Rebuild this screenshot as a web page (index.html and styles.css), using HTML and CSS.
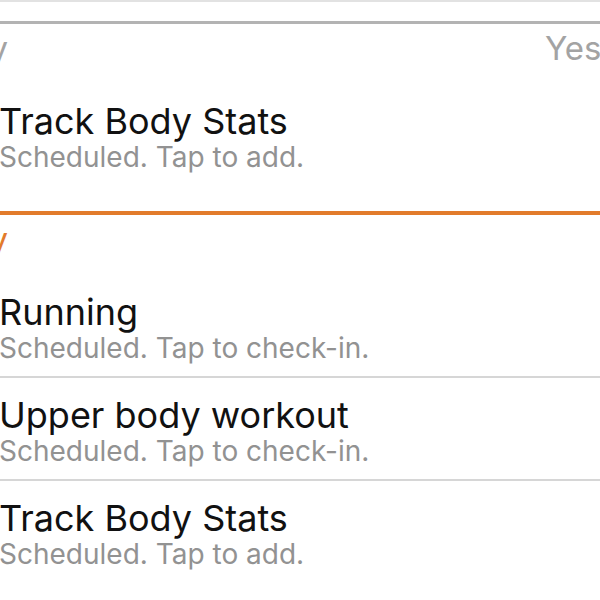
FILE: index.html
```html
<!DOCTYPE html>
<html lang="en">
<head>
<meta charset="utf-8">
<title>Schedule</title>
<link rel="stylesheet" href="styles.css">
</head>
<body>
<div class="screen">
  <div class="prev-row"></div>
  <section class="day day-past">
    <div class="day-head">
      <span class="day-name">Monday</span>
      <span class="day-date">Yesterday</span>
    </div>
    <div class="item item-last">
      <div class="item-title">Track Body Stats</div>
      <div class="item-sub">Scheduled. Tap to add.</div>
    </div>
  </section>
  <section class="day day-today">
    <div class="day-head">
      <span class="day-name">Today</span>
    </div>
    <div class="item">
      <div class="item-title">Running</div>
      <div class="item-sub">Scheduled. Tap to check-in.</div>
    </div>
    <div class="item">
      <div class="item-title">Upper body workout</div>
      <div class="item-sub">Scheduled. Tap to check-in.</div>
    </div>
    <div class="item item-last">
      <div class="item-title">Track Body Stats</div>
      <div class="item-sub">Scheduled. Tap to add.</div>
    </div>
  </section>
</div>
</body>
</html>
```

FILE: styles.css
```css
html, body {
  margin: 0;
  padding: 0;
  background: #ffffff;
}
body {
  width: 600px;
  height: 600px;
  overflow: hidden;
  font-family: Inter, "Liberation Sans", sans-serif;
}
.screen {
  width: 600px;
  overflow: hidden;
}
.prev-row {
  height: 19px;
  border-top: 2px solid #e2e2e2;
}
.day-past {
  border-top: 3px solid #b3b3b3;
  padding-bottom: 37px;
}
.day-today {
  border-top: 4px solid #e27b2b;
}
.day-head {
  display: flex;
  height: 56px;
  padding-top: 4px;
  font-size: 33px;
  line-height: 40px;
  white-space: nowrap;
  overflow: hidden;
}
.day-name {
  flex: none;
  width: 128px;
  margin-left: -120px;
  text-align: right;
  color: #a3a3a3;
}
.day-today .day-name {
  color: #e27b2b;
}
.day-date {
  flex: none;
  margin-left: 537px;
  color: #a3a3a3;
}
.item {
  padding: 17px 0 11px 0;
  margin-left: -1px;
  border-bottom: 2px solid #d6d6d6;
}
.item-last {
  border-bottom: none;
  padding-bottom: 0;
}
.item-title {
  font-size: 36px;
  line-height: 40px;
  color: #111111;
  white-space: nowrap;
}
.item-sub {
  font-size: 28px;
  line-height: 33px;
  color: #929292;
  white-space: nowrap;
}
```
